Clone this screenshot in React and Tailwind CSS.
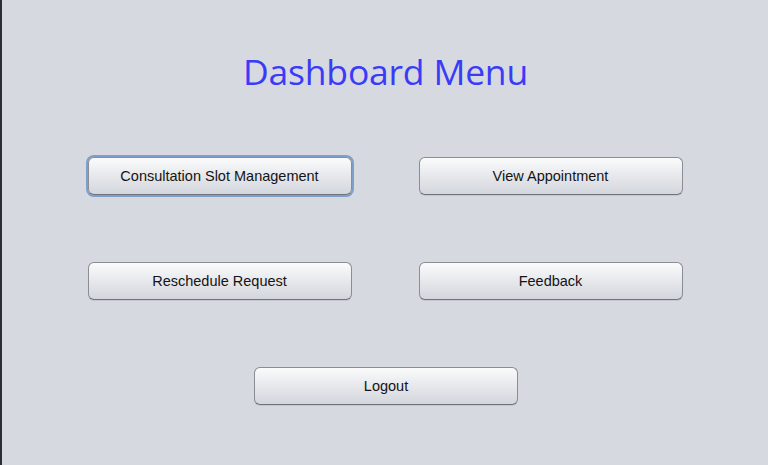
import React from "react";

const btnBase =
  "w-[264px] h-[38px] rounded-[6px] border border-[#8a8d94] border-b-[#707379] bg-gradient-to-b from-[#fbfbfc] via-[#e6e8ec] to-[#d3d6dc] shadow-[0_1px_0_#c4c7cd] text-[14.5px] text-[#141414] font-['Liberation_Sans',Arial,sans-serif] flex items-center justify-center pt-[1px]";

const Button = ({ label, focused }) => (
  <button
    className={
      focused
        ? btnBase + " ring-2 ring-[#7f9fcb] border-[#5f6f88]"
        : btnBase
    }
  >
    {label}
  </button>
);

export default function App() {
  return (
    <div className="flex w-[768px] h-[465px] overflow-hidden">
      {/* left window edge */}
      <div className="w-[2px] h-full bg-[#2a2e35]" />
      <div className="flex-1 h-full bg-[#d6d9df] flex flex-col items-center pt-[48px]">
        <h1 className="ml-[1px] text-[35.5px] leading-[46px] text-[#3b3bf7] font-['Open_Sans','Noto_Sans',sans-serif] tracking-[-0.2px]">
          Dashboard Menu
        </h1>
        <div className="mt-[63px] flex flex-col items-center gap-[67px]">
          <div className="flex gap-[67px]">
            <Button label="Consultation Slot Management" focused />
            <Button label="View Appointment" />
          </div>
          <div className="flex gap-[67px]">
            <Button label="Reschedule Request" />
            <Button label="Feedback" />
          </div>
          <div className="pl-[2px]">
            <Button label="Logout" />
          </div>
        </div>
      </div>
    </div>
  );
}
